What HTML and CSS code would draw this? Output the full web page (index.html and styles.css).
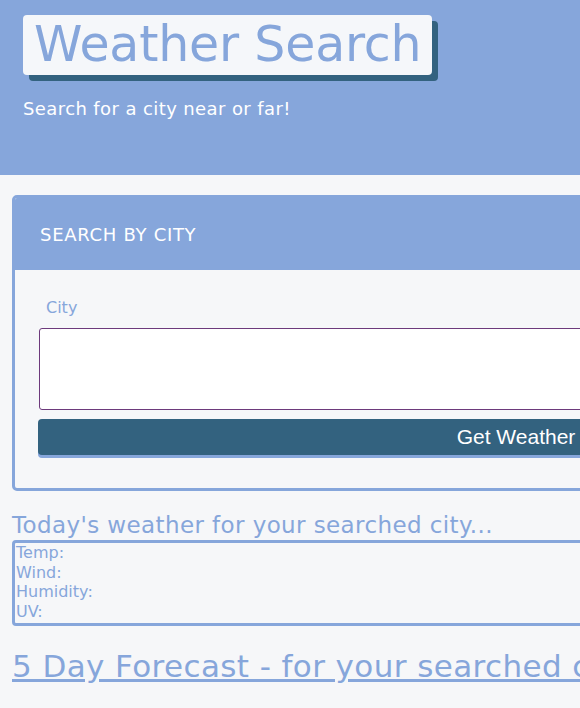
FILE: index.html
```html
<!DOCTYPE html>
<html>
<head>
<meta charset="utf-8">
<link rel="stylesheet" href="styles.css">
</head>
<body>
<header class="hero">
  <h1 class="title">Weather Search</h1>
  <p class="subtitle">Search for a city near or far!</p>
</header>
<main class="main">
  <section class="card">
    <div class="card-head">SEARCH BY CITY</div>
    <div class="card-body">
      <label class="label" for="city">City</label>
      <input class="input" id="city" type="text">
      <button class="btn">Get Weather</button>
    </div>
  </section>
  <h2 class="today-title">Today's weather for your searched city...</h2>
  <div class="today">
    <div>Temp:</div>
    <div>Wind:</div>
    <div>Humidity:</div>
    <div>UV:</div>
  </div>
  <h2 class="forecast"><u>5 Day Forecast - for your searched city</u></h2>
</main>
</body>
</html>
```
FILE: styles.css
```css
html, body { margin: 0; padding: 0; }
body {
  background: #f6f7f9;
  font-family: "DejaVu Sans", "Open Sans", sans-serif;
  overflow: hidden;
  width: 580px;
  height: 708px;
}
.hero {
  background: #86a6db;
  height: 175px;
  padding: 15px 23px 0;
  box-sizing: border-box;
}
.title {
  display: inline-block;
  margin: 0;
  background: #f5f7fa;
  color: #86a6db;
  font-weight: normal;
  font-size: 49px;
  letter-spacing: -0.2px;
  line-height: 60px;
  height: 60px;
  padding: 0 11px;
  border-radius: 4px;
  box-shadow: 6px 6px 0 #33627f;
}
.subtitle {
  margin: 23px 0 0;
  color: #fff;
  font-size: 18px;
  letter-spacing: 0.4px;
}
.main {
  padding: 20px 12px 0;
  width: 985px;
}
.card {
  border: 3px solid #86a6db;
  border-radius: 5px;
  overflow: hidden;
}
.card-head {
  background: #86a6db;
  color: #fff;
  font-size: 18px;
  letter-spacing: 0.7px;
  height: 72px;
  line-height: 74px;
  padding-left: 25px;
}
.card-body {
  padding: 27px 0 33px 24px;
  display: flex;
  flex-direction: column;
}
.label {
  color: #86a6db;
  font-size: 16px;
  margin-left: 7px;
  line-height: 22px;
}
.input {
  margin-top: 9px;
  height: 82px;
  box-sizing: border-box;
  border: 1px solid #6d3a7c;
  border-radius: 3px;
  background: #fff;
}
.btn {
  margin-top: 9px;
  margin-left: -1px;
  height: 36px;
  border: none;
  border-radius: 4px;
  background: #33627f;
  color: #fff;
  font-family: "Liberation Sans", Arial, sans-serif;
  font-size: 21px;
  box-shadow: 0 3px 0 #86a6db;
}
.today-title {
  margin: 19px 0 0;
  color: #86a6db;
  font-size: 23px;
  letter-spacing: 0.4px;
  font-weight: normal;
  line-height: 30px;
}
.today {
  border: 3px solid #86a6db;
  border-radius: 4px;
  color: #86a6db;
  font-size: 16px;
  line-height: 19.5px;
  padding: 0 1px 3px;
  box-sizing: border-box;
  height: 86px;
}
.forecast {
  margin: 22px 0 0;
  color: #86a6db;
  font-size: 31px;
  letter-spacing: 0.4px;
  font-weight: normal;
  white-space: nowrap;
}
```
